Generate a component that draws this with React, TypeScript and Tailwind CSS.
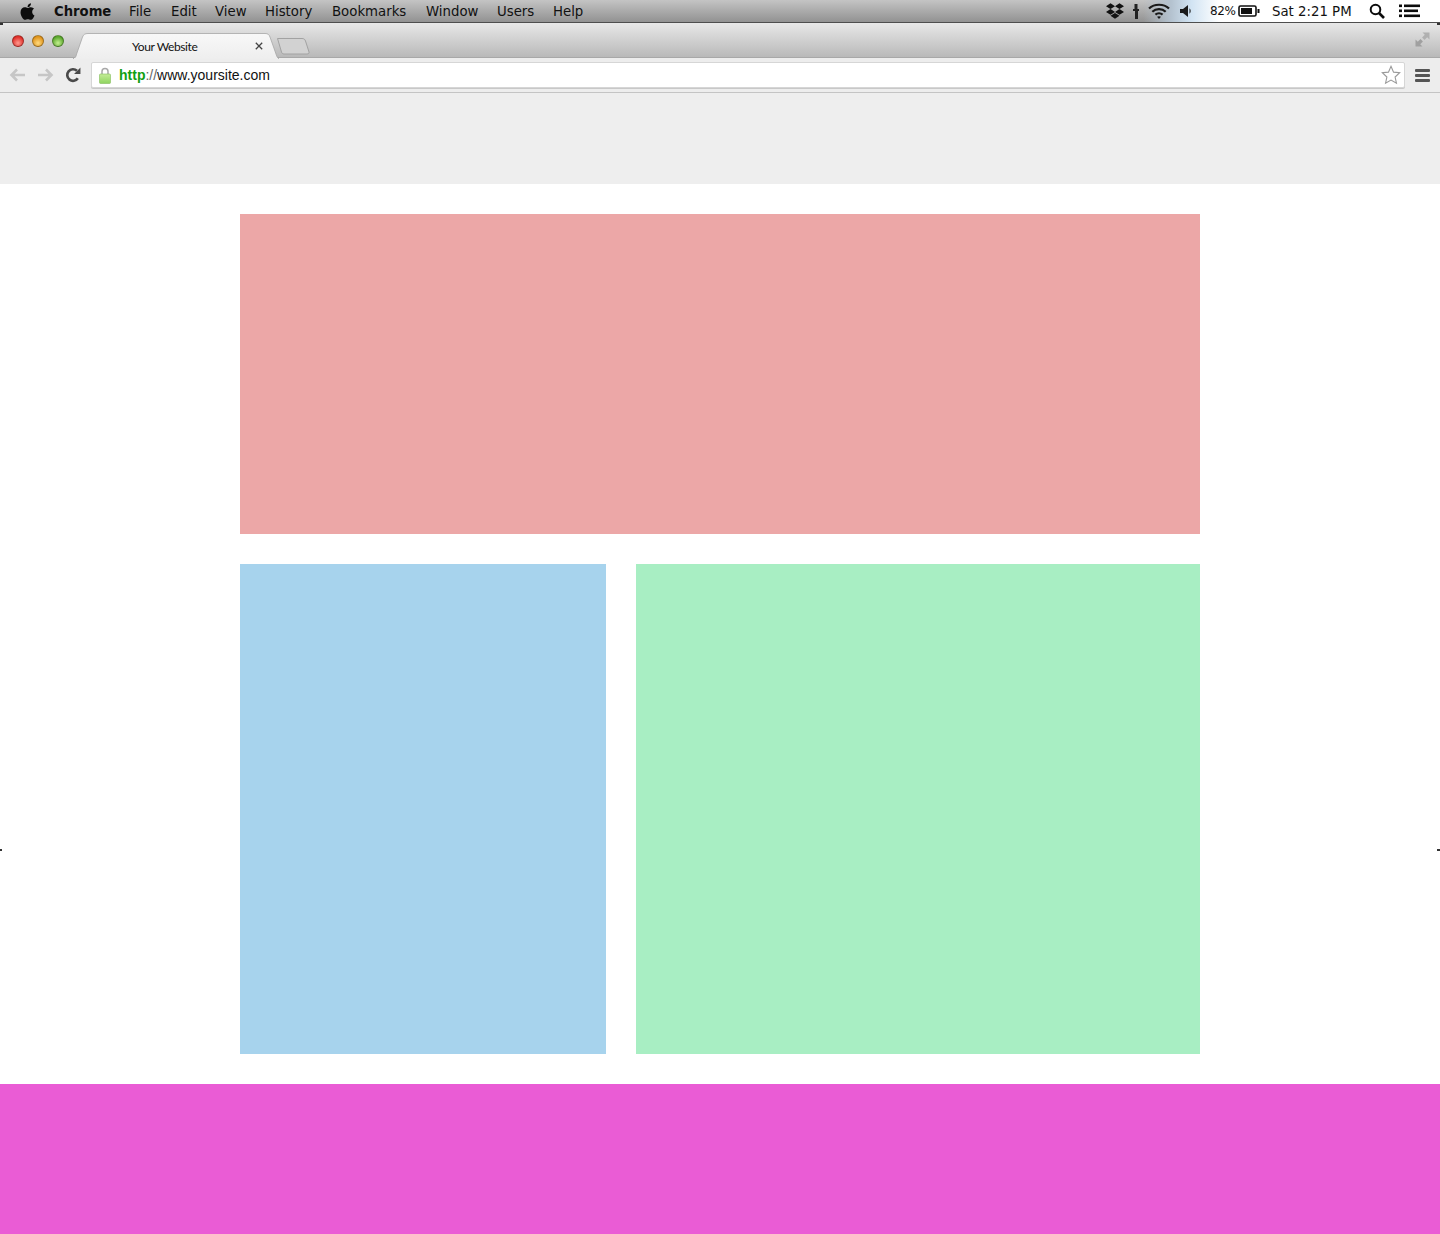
import React from "react";
import { FaApple, FaDropbox } from "react-icons/fa";

const menus = [
  { t: "File", w: "w-[24px]" },
  { t: "Edit", w: "w-[26px]" },
  { t: "View", w: "w-[32px]" },
  { t: "History", w: "w-[49px]" },
  { t: "Bookmarks", w: "w-[76px]" },
  { t: "Window", w: "w-[53px]" },
  { t: "Users", w: "w-[38px]" },
  { t: "Help", w: "w-[31px]" },
];

function Light({ c }: { c: string }) {
  return <span className={`block w-[12px] h-[12px] rounded-full border border-black/30 ${c}`} />;
}

function Wifi() {
  return (
    <svg width="22" height="16" viewBox="0 0 22 16" fill="none" stroke="#1a1a1a" strokeWidth="2.2">
      <path d="M1 5.5C6.3 .5 15.7 .5 21 5.5" />
      <path d="M4.3 8.8C8 5.2 14 5.2 17.7 8.8" />
      <path d="M7.4 11.6C9.4 9.9 12.6 9.9 14.6 11.6" />
      <path d="M11 16l-2-2.2c1.1-.9 2.9-.9 4 0z" fill="#1a1a1a" stroke="none" />
    </svg>
  );
}

export default function App() {
  return (
    <div className="relative w-[1440px] min-h-[1234px] bg-white flex flex-col font-['Liberation_Sans',sans-serif]">
      <header className="h-[23px] shrink-0 flex bg-gradient-to-b from-[#c4c4c4] to-[#929292] border-b border-[#4e4e4e] font-['DejaVu_Sans',sans-serif] text-[13.3px] text-[#111]">
        <div className="flex items-center flex-1 gap-[18px]">
          <FaApple className="ml-[18px] -mr-[1px] text-[#0c0c0c]" size={19} />
          <span className="pt-[2px] w-[57px] font-bold text-[13.2px] whitespace-nowrap">Chrome</span>
          {menus.map((m) => (
            <span key={m.t} className={`pt-[2px] ${m.w} whitespace-nowrap`}>{m.t}</span>
          ))}
        </div>
        <div className="w-[345px] flex items-center bg-[linear-gradient(to_right,transparent_14%,#b4c2cf_22%,#d2e4f3_28%,#ffffff_36%)]">
          <FaDropbox className="ml-[11px] text-[#111]" size={18} />
          <svg className="ml-[8px]" width="8" height="15" viewBox="0 0 8 15" fill="#222">
            <path d="M2.5 0h3v5h1.5v2h-1v8h-3V7H1V5h1.5z" />
          </svg>
          <span className="ml-[8px] flex"><Wifi /></span>
          <svg className="ml-[10px]" width="13" height="12" viewBox="0 0 13 12" fill="#1a1a1a">
            <path d="M0 4h3l5-4v12l-5-4H0z" />
            <path d="M9.5 3.2c1.6 1.3 1.6 4.3 0 5.6z" />
          </svg>
          <span className="ml-[17px] text-[12px] w-[24px] tracking-[-0.4px] whitespace-nowrap">82%</span>
          <svg className="ml-[4px]" width="22" height="12" viewBox="0 0 22 12" fill="none">
            <rect x="1" y="1" width="17" height="10" rx="1.5" stroke="#111" strokeWidth="1.6" />
            <rect x="3" y="3" width="11" height="6" fill="#111" />
            <rect x="19.5" y="4" width="2" height="4" fill="#111" />
          </svg>
          <span className="ml-[12px] pt-[2px] w-[82px] whitespace-nowrap">Sat 2:21 PM</span>
          <svg className="ml-[15px]" width="16" height="16" viewBox="0 0 16 16" fill="none" stroke="#0c0c0c">
            <circle cx="6.5" cy="6.5" r="4.8" strokeWidth="2" />
            <path d="M10 10l5 5" strokeWidth="2.6" />
          </svg>
          <svg className="ml-[14px]" width="21" height="14" viewBox="0 0 21 14" fill="#0c0c0c">
            <rect x="0" y="0.5" width="3" height="2.6" />
            <rect x="5" y="0.5" width="16" height="2.6" />
            <rect x="0" y="5.5" width="3" height="2.6" />
            <rect x="5" y="5.5" width="14" height="2.6" />
            <rect x="0" y="10.5" width="3" height="2.6" />
            <rect x="5" y="10.5" width="16" height="2.6" />
          </svg>
        </div>
      </header>

      <div className="h-[35px] shrink-0 flex bg-gradient-to-b from-[#e8e8e8] to-[#b9b9b9] border-b border-[#a8a8a8]">
        <div className="flex items-start pt-[12px] pl-[12px] gap-[8px] w-[73px]">
          <Light c="bg-[radial-gradient(circle_at_50%_70%,#ff9a90,#e0302a_70%)]" />
          <Light c="bg-[radial-gradient(circle_at_50%_70%,#ffdb80,#e0941c_70%)]" />
          <Light c="bg-[radial-gradient(circle_at_50%_70%,#c4f090,#5ca82e_70%)]" />
        </div>
        <div className="relative w-[206px] h-[36px] z-10 flex items-center">
          <svg className="absolute inset-0" width="206" height="36" viewBox="0 0 206 36">
            <defs>
              <linearGradient id="tabfill" x1="0" y1="0" x2="0" y2="1">
                <stop offset="0" stopColor="#f8f8f8" />
                <stop offset="1" stopColor="#eeeeee" />
              </linearGradient>
            </defs>
            <path d="M0 35.5C2 35.5 3 34 3.6 31L9.5 14C10.5 11.5 12 10.5 15 10.5H192C195 10.5 196 11.5 197 14L203 31C204 34 204.5 35 206 35.5V36H0Z" fill="url(#tabfill)" stroke="#a6a6a6" strokeWidth="0.8" />
            <rect x="1" y="35" width="204" height="1.5" fill="#eeeeee" />
          </svg>
          <span className="relative ml-[59px] mt-[11px] text-[12px] tracking-[-0.4px] text-[#111] font-['Lato',sans-serif] whitespace-nowrap">Your Website</span>
          <span className="relative ml-[58px] mt-[10px] flex">
            <svg width="8" height="8" viewBox="0 0 8 8" stroke="#444" strokeWidth="1.3"><path d="M.8.8l6.4 6.4M7.2.8L.8 7.2" /></svg>
          </span>
        </div>
        <svg className="mt-[14px] -ml-[3px]" width="34" height="18" viewBox="0 0 34 18" fill="none">
          <path d="M1.5 1.5H26C28 1.5 29 2.5 29.5 4L33 15C33.3 16.3 32.5 17 31 17H8C6.5 17 6 16.3 5.5 15Z" fill="#d2d2d2" stroke="#a2a2a2" />
        </svg>
        <span className="flex-1" />
        <svg className="mt-[9px] mr-[10px]" width="15" height="15" viewBox="0 0 15 15" fill="#a0a0a0">
          <path d="M7.5 0.5H14.5V7.5L12.2 5.2 9.5 7.9 7.1 5.5 9.8 2.8Z" fill="#b0b0b0" />
          <path d="M0.5 7.5V14.5H7.5L5.2 12.2 7.9 9.5 5.5 7.1 2.8 9.8Z" />
        </svg>
      </div>

      <div className="h-[35px] shrink-0 flex items-center bg-[#ededed] border-b border-[#c4c4c4]">
        <svg className="ml-[9px]" width="17" height="14" viewBox="0 0 17 14" fill="none" stroke="#c6c6c6" strokeWidth="2.6">
          <path d="M16 7H3M8 1.5L2.5 7 8 12.5" />
        </svg>
        <svg className="ml-[11px]" width="17" height="14" viewBox="0 0 17 14" fill="none" stroke="#c6c6c6" strokeWidth="2.6">
          <path d="M1 7H14M9 1.5L14.5 7 9 12.5" />
        </svg>
        <svg className="ml-[11px]" width="16" height="16" viewBox="0 0 15 15" fill="none">
          <path d="M12 10.5A5.4 5.4 0 1 1 11.2 3.6" stroke="#4a4a4a" strokeWidth="2.5" />
          <path d="M8.5 6.5H14.5V0.5Z" fill="#4a4a4a" />
        </svg>
        <div className="ml-[10px] w-[1314px] h-[26px] flex items-center bg-white rounded-[2px] border border-[#d6d6d6] shadow-[0_1px_0_#c8c8c8]">
          <svg className="ml-[7px]" width="12" height="17" viewBox="0 0 12 17" fill="none">
            <defs>
              <linearGradient id="lockfill" x1="0" y1="0" x2="0" y2="1">
                <stop offset="0" stopColor="#c4ec98" />
                <stop offset="1" stopColor="#8ed45e" />
              </linearGradient>
            </defs>
            <path d="M3 8V4.5a3 3 0 0 1 6 0V8" stroke="#a8a8a8" strokeWidth="1.5" />
            <rect x="0.5" y="7" width="11" height="9.5" rx="1" fill="url(#lockfill)" stroke="#84bc5c" strokeWidth="0.6" />
          </svg>
          <span className="ml-[8px] text-[14px] text-[#111] whitespace-nowrap">
            <b className="text-[#12a012]">http</b><span className="text-[#666]">://</span>www.yoursite.com
          </span>
          <svg className="ml-auto mr-[3px]" width="20" height="20" viewBox="0 0 18 18" fill="#fff" stroke="#9a9a9a" strokeWidth="1">
            <path d="M9 1.2l2.3 5.2 5.5.6-4.1 3.8 1.2 5.6L9 13.6l-4.9 2.8 1.2-5.6L1.2 7l5.5-.6z" />
          </svg>
        </div>
        <div className="ml-[10px] w-[15px] flex flex-col gap-[2px]">
          <span className="block h-[3px] rounded-[1px] bg-[#555]" />
          <span className="block h-[3px] rounded-[1px] bg-[#555]" />
          <span className="block h-[3px] rounded-[1px] bg-[#555]" />
        </div>
      </div>

      <div className="h-[91px] shrink-0 bg-[#eeeeee]" />

      <main className="w-[960px] mx-auto py-[30px] flex flex-col gap-[30px]">
        <div className="h-[320px] bg-[#eca7a7]" />
        <div className="flex gap-[30px]">
          <div className="w-[366px] h-[490px] bg-[#a7d3ed]" />
          <div className="flex-1 h-[490px] bg-[#a8eec3]" />
        </div>
      </main>

      <footer className="h-[150px] shrink-0 bg-[#ea5cd5]" />

      <span className="absolute left-0 top-[23px] w-[3px] h-[2px] bg-[#333]" />
      <span className="absolute right-0 top-[23px] w-[3px] h-[2px] bg-[#333]" />
      <span className="absolute left-0 top-[849px] w-[2px] h-[2px] bg-[#333]" />
      <span className="absolute right-0 top-[849px] w-[3px] h-[2px] bg-[#333]" />
    </div>
  );
}
